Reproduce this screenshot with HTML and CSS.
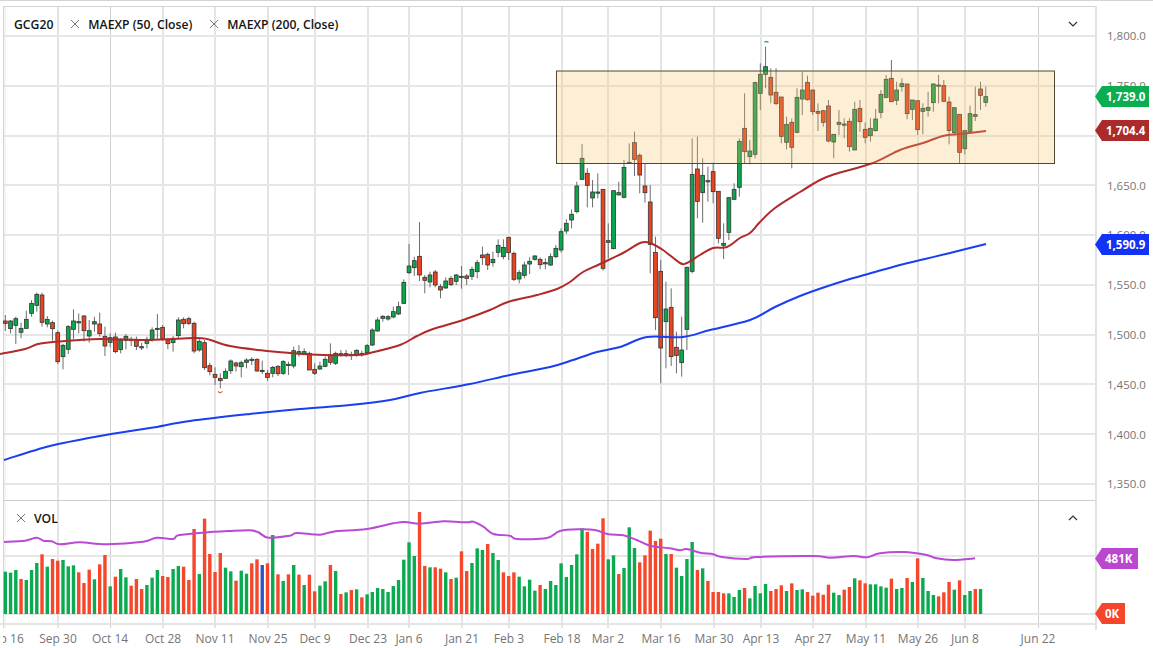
FILE: index.html
```html
<!DOCTYPE html>
<html lang="en">
<head>
<meta charset="utf-8">
<title>GCG20 chart</title>
<link rel="stylesheet" href="styles.css">
</head>
<body>
<main class="chart">
  <section class="pane">
    <svg id="price-plot" class="plot" width="1095" height="494" viewBox="0 6 1095 494" aria-label="Price chart"></svg>
    <div class="legend">
      <span class="symbol">GCG20</span>
      <span class="study"><svg class="close" viewBox="0 0 8 8"><path d="M0 0l8 8M8 0l-8 8"/></svg>MAEXP (50, Close)</span>
      <span class="study"><svg class="close" viewBox="0 0 8 8"><path d="M0 0l8 8M8 0l-8 8"/></svg>MAEXP (200, Close)</span>
    </div>
    <svg class="chevron" viewBox="0 0 10 6"><path d="M1 1l4 4 4-4"/></svg>
  </section>
  <aside class="axis price-axis">
    <div class="tick">1,800.0</div>
    <div class="tick">1,750.0</div>
    <div class="tick">1,700.0</div>
    <div class="tick">1,650.0</div>
    <div class="tick">1,600.0</div>
    <div class="tick">1,550.0</div>
    <div class="tick">1,500.0</div>
    <div class="tick">1,450.0</div>
    <div class="tick">1,400.0</div>
    <div class="tick">1,350.0</div>
    <span class="tag tag-green">1,739.0</span>
    <span class="tag tag-maroon">1,704.4</span>
    <span class="tag tag-blue">1,590.9</span>
  </aside>
  <section class="pane">
    <svg id="volume-plot" class="plot" width="1095" height="130" viewBox="0 500 1095 130" aria-label="Volume chart"></svg>
    <div class="legend legend-vol">
      <span class="study"><svg class="close" viewBox="0 0 8 8"><path d="M0 0l8 8M8 0l-8 8"/></svg>VOL</span>
    </div>
    <svg class="chevron" viewBox="0 0 10 6"><path d="M1 5l4-4 4 4"/></svg>
  </section>
  <aside class="axis volume-axis">
    <span class="tag tag-purple">481K</span>
    <span class="tag tag-red">0K</span>
  </aside>
  <nav class="time-axis">
    <span style="left:2px">Sep 16</span>
    <span style="left:55px">Sep 30</span>
    <span style="left:107px">Oct 14</span>
    <span style="left:160px">Oct 28</span>
    <span style="left:212px">Nov 11</span>
    <span style="left:265px">Nov 25</span>
    <span style="left:312px">Dec 9</span>
    <span style="left:365px">Dec 23</span>
    <span style="left:406px">Jan 6</span>
    <span style="left:459px">Jan 21</span>
    <span style="left:506px">Feb 3</span>
    <span style="left:559px">Feb 18</span>
    <span style="left:605px">Mar 2</span>
    <span style="left:658px">Mar 16</span>
    <span style="left:711px">Mar 30</span>
    <span style="left:758px">Apr 13</span>
    <span style="left:810px">Apr 27</span>
    <span style="left:863px">May 11</span>
    <span style="left:915px">May 26</span>
    <span style="left:962px">Jun 8</span>
    <span style="left:1035px">Jun 22</span>
  </nav>
</main>
<script src="chart.js"></script>
</body>
</html>
```
FILE: styles.css
```css
* { box-sizing: border-box; }
html, body { margin: 0; padding: 0; background: #fff; }
body { overflow: hidden; font-family: "Open Sans", "Liberation Sans", sans-serif; }

.chart {
  width: 1153px;
  height: 648px;
  padding-top: 5px;
  border-top: 1px solid #d4d4d4;
  display: grid;
  grid-template-columns: 1095px 58px;
  grid-template-rows: 494px 130px 18px;
  overflow: hidden;
}

.pane { position: relative; }
.plot { display: block; }

.legend {
  position: absolute;
  left: 14px;
  top: 0;
  height: 36px;
  display: flex;
  align-items: center;
  gap: 18px;
  font-size: 12.2px;
  font-weight: 600;
  color: #141414;
  white-space: nowrap;
}
.legend .study { display: inline-flex; align-items: center; gap: 9px; }
.legend-vol { left: 17px; top: 0; height: 36px; }
.close { width: 8px; height: 8px; fill: none; stroke: #777; stroke-width: 1; }

.chevron {
  position: absolute;
  right: 17px;
  top: 15px;
  width: 10px;
  height: 6px;
  fill: none;
  stroke: #333;
  stroke-width: 1.2;
}

.axis { position: relative; border-left: 2px solid #e2e2e2; }
.price-axis { padding-top: 5px; }
.tick {
  height: 49.78px;
  display: flex;
  align-items: center;
  padding-left: 10px;
  font-size: 11.5px;
  color: #757575;
}

.tag {
  position: absolute;
  left: -2px;
  height: 21px;
  display: flex;
  align-items: center;
  padding-left: 11px;
  font-size: 11.5px;
  font-weight: 700;
  color: #fff;
  clip-path: polygon(7px 0, 100% 0, 100% 100%, 7px 100%, 0 50%);
}
.tag-green { top: 80px; width: 54px; background: #0aad50; }
.tag-maroon { top: 114px; width: 54px; background: #ab2b2b; }
.tag-blue { top: 228px; width: 54px; background: #1233f5; }
.tag-purple { top: 48px; width: 43px; background: #bb46d0; padding-left: 10px; }
.tag-red { top: 103px; width: 30px; background: #f5452b; padding-left: 10px; }

.time-axis {
  grid-column: 1 / -1;
  position: relative;
  overflow: hidden;
  margin-left: 3px;
  font-size: 12px;
  color: #757575;
}
.time-axis span {
  position: absolute;
  top: 0;
  transform: translateX(-50%);
  white-space: nowrap;
}
```
FILE: chart.js
```js
const SVGNS = 'http://www.w3.org/2000/svg';
const X = i => 5.33 + 5.243 * i;
const COLORS = { g: '#0aa54d', r: '#e9431f', b: '#2c55c9' };
const VOL_COLORS = { g: '#0aab50', r: '#f6472b', b: '#2c55c9' };

function add(svg, name, attrs) {
  const el = document.createElementNS(SVGNS, name);
  for (const k in attrs) el.setAttribute(k, attrs[k]);
  svg.appendChild(el);
  return el;
}
function parse(y0, text) {
  return text.trim().split(/\s*;\s*/).map(r => {
    const p = r.split(/\s+/);
    return [p[0]].concat(p.slice(1).map(v => y0 + v / 3));
  });
}
function line(x0, y0, flat) {
  const out = [];
  for (let i = 0; i < flat.length; i += 2) out.push([x0 + flat[i] / 3, y0 + flat[i + 1] / 3]);
  return out;
}
function smooth(pts) {
  let d = 'M' + pts[0][0].toFixed(1) + ' ' + pts[0][1].toFixed(1);
  for (let i = 0; i < pts.length - 1; i++) {
    const a = pts[i - 1] || pts[i], b = pts[i], c = pts[i + 1], e = pts[i + 2] || c;
    const c1x = b[0] + (c[0] - a[0]) / 6, c1y = b[1] + (c[1] - a[1]) / 6;
    const c2x = c[0] - (e[0] - b[0]) / 6, c2y = c[1] - (e[1] - b[1]) / 6;
    d += 'C' + [c1x, c1y, c2x, c2y, c[0], c[1]].map(v => v.toFixed(1)).join(' ');
  }
  return d;
}

const candles = [].concat(
  parse(270, `r 135 153 160 183;g 150 153 176 190;g 140 146 166 222;g 158 175 187 205;g 122 148 175 175;
g 90 100 130 140;g 68 73 106 125;r 68 75 157 170;g 138 148 162 172;r 152 158 176 212;r 182 188 275 282;
g 222 226 260 298;g 165 170 238 252;g 118 153 178 208;g 130 155 158 190;r 135 138 182 215;g 150 182 198 218;
g 140 155 162 185;r 128 162 191 200;r 170 199 228 258;g 190 203 217 232;r 188 201 245 250;g 205 211 239 250;
g 192 199 211 238;g 200 208 211 228;r 200 208 229 240;g 218 230 232 240;g 200 208 220 235;g 172 180 208 215;
g 132 175 178 208;r 165 172 207 212;r 203 209 221 238;g 198 205 218 245;g 142 150 197 205;r 142 148 161 175;
r 140 146 160 165;r 155 160 243 250;g 205 214 240 245;r 210 218 293 300;r 278 287 305 316;r 292 313 322 345;
r 310 325 332 355;g 295 304 325 325;g 268 273 302 312;r 275 279 288 305;g 272 278 290 322;g 265 270 277 295;
g 262 268 271 285;r 265 268 303 305;g 272 301 303 312;r 300 310 322 332;g 288 292 310 322;r 285 289 311 318;
g 270 275 310 315;g 275 283 286 315`),
  parse(200, `g 440 452 498 505;g 435 455 460 470;g 445 455 462 465;r 455 460 510 510;r 490 508 520 525;
g 485 498 507 510;g 470 478 499 502;r 430 465 487 495;g 455 460 490 495;g 450 461 465 470;g 450 461 464 472;
g 455 463 466 480;g 448 451 465 470;r 452 460 464 470;g 432 437 458 462;g 385 390 435 438;g 352 360 393 395;
g 345 349 355 365;g 345 350 357 362;g 320 335 351 355;g 305 320 342 345;g 238 247 310 312;g 132 198 218 222;
g 170 182 203 228;r 66 169 225 243;r 225 232 241 280;g 215 225 246 262;r 210 216 255 262;r 252 260 270 295;
g 232 243 264 266;r 228 235 254 258;g 222 225 244 255;g 198 229 232 266;r 222 228 235 255;g 200 208 229 240;
g 180 188 215 235;r 140 165 173 195;r 158 163 195 210;g 155 178 188 200;g 118 136 157 172;g 118 142 170 178;
r 110 112 158 180;r 155 160 238 243;g 210 218 237 250;g 185 195 226 235;g 172 184 192 222;g 165 168 178 182;
r 172 178 194 208;g 175 188 191 208;g 160 170 195 198`),
  parse(130, `g 345 355 380 385;g 295 305 360 368;g 268 280 303 312;g 238 253 270 295;g 155 168 245 250;
g 42 85 148 150;r 115 130 166 232;g 150 186 204 232;g 130 186 188 205;r 178 178 415 422;g 280 332 337 385;
g 182 182 356 358;g 155 188 195 195;g 90 112 202 205;g 40 97 99 100;r 5 38 88 138;r 70 76 135 190;
r 100 168 188 218;r 165 216 343 430;r 320 367 563 600;r 390 424 654 760;g 455 537 575 715;r 475 532 680 708;
r 605 652 676 730;g 560 660 698 740;g 410 412 598 660;g 25 133 424 430;r 20 117 214 265;g 85 136 188 278;
g 110 152 155 215;r 98 125 185 220;r 184 184 325 340;g 280 340 346 387;g 203 203 307 330;g 160 178 208 208;
g 25 34 172 200`),
  parse(35, `r 175 280 350 385;g 315 348 365 388;g 140 143 358 370;g 85 118 175 225;g 35 95 118 160;
r 100 127 180 205;r 100 172 206 210;r 186 186 304 325;g 245 268 322 343;r 250 262 337 400;g 160 187 292 295;
g 110 165 192 240;r 122 142 194 197;r 165 165 230 240;r 205 229 235 288;r 225 227 262 275;r 195 213 318 322;
g 298 298 321 370;g 225 262 268 300;g 250 267 270 310;r 250 259 335 350;g 200 223 345 345;r 195 220 260 290;
r 262 283 307 325;g 250 280 302 320;g 222 252 287 290;g 165 178 232 250;g 120 133 187 190;r 75 130 200 200;
g 140 165 196 210;g 130 146 155 170;r 147 147 236 253;g 195 195 223 255;r 197 197 284 300;g 205 220 229 298;
g 170 217 226 245;g 145 147 203 230;r 120 150 153 205;r 135 152 199 200;r 185 201 287 328;g 218 218 293 302;
r 238 238 352 385;g 287 287 341 358;g 212 236 289 290;g 155 239 244 258;r 140 162 181 225;g 155 185 202 215`)
);

const volumes = parse(495, `g 230;g 233;g 225;r 252;g 255;g 225;g 204;r 178;g 215;r 192;r 197;g 195;g 214;g 211;r 232;r 264;r 224;
g 253;r 208;r 180;g 274;r 245;g 222;g 247;r 272;r 252;r 282;g 270;g 248;g 225;r 243;r 246;g 222;g 213;r 215;r 255;
r 102;g 237;r 71;r 177;r 231;r 174;g 218;g 229;r 257;g 227;g 236;r 205;r 193;b 210;r 205;g 120;r 238;g 258;r 238;
g 210;r 239;g 270;r 239;r 289;g 272;g 259;r 210;g 228;r 297;g 292;r 285;g 283;r 307;g 298;g 291;g 279;g 282;g 291;
g 273;g 255;g 194;g 142;g 183;r 51;r 213;g 217;r 217;r 221;g 232;r 252;g 248;r 169;r 228;g 204;g 160;g 165;r 147;
g 174;g 195;r 232;r 243;r 232;g 245;g 274;g 254;g 287;r 270;g 282;g 258;g 270;g 205;g 246;g 210;g 178;
g 100;r 111;r 162;r 146;r 70;g 193;g 181;r 237;g 219;g 97;g 159;r 202;r 181;r 107;r 138;r 131;g 177;r 177;g 218;
g 243;g 192;g 141;r 225;g 220;r 258;r 291;r 291;r 295;g 295;g 306;g 285;r 279;g 310;g 273;g 295;g 267;r 288;r 282;
r 271;g 288;r 265;g 285;g 283;r 291;r 302;r 293;r 299;r 269;g 293;g 300;r 284;r 276;g 250;r 256;r 265;
g 268;g 268;g 274;g 278;r 251;g 282;g 279;r 249;g 261;r 190;g 249;g 288;g 300;r 304;r 292;r 261;g 284;r 256;g 300;
g 288;r 282;g 282`);

const ma50 = [[0,354],[25,349],[38,344],[53,342],[100,339],[150,340],[193,338],[207,339],[230,346],[267,351],[290,353],
  [323,355],[357,355],[370,353],[400,345],[417,336],[433,329],[463,320],[490,310],[508,302],[537,295],[557,289],[570,282],
  [583,272],[600,264],[623,253],[640,243],[650,243],[663,250],[680,263],[687,263],[700,255],[713,248],[727,247],[740,238],
  [750,233],[760,222],[775,208],[800,192],[820,180],[835,174],[873,163],[900,150],[923,143],[943,136],[960,134],[986,131]];
const ma200 = [[4,460],[50,446],[100,436],[150,428],[190,421],[250,414],[300,409],[350,405],[390,400],[420,393],[470,384],
  [510,375],[550,367],[573,360],[597,352],[620,347],[647,337],[683,337],[710,330],[750,320],[775,307],[800,296],[825,287],
  [850,279],[875,272],[900,265],[925,259],[950,253],[986,244]];
const volMa = [].concat(
  line(0, 495, [12,141,75,137,110,128,130,137,155,139,180,148,240,142,320,148,430,140,470,128,520,132,535,121,610,113,690,108,750,106,775,112,805,128]),
  line(290, 495, [0,122,20,114,90,119,130,110,230,102,310,85,345,81,390,86,460,79,530,82,550,80,580,95,610,117,660,122,680,132,770,129,810,108]),
  line(580, 495, [0,103,45,105,85,118,130,121,170,135,210,152,270,160,300,166,320,162,360,173,400,178,425,186,500,192,530,186,700,183,750,188,820,183]),
  line(860, 495, [20,187,60,175,130,171,200,180,230,190,280,195,345,190])
);

const thick = [58,163,215,268,315,368,409,462,509,562,608,661,714,761,813,866,918,965];
const thin = [110.5,1038.5];

function verticals(svg, y1, y2) {
  thick.forEach(x => add(svg, 'line', { x1: x, x2: x, y1, y2, stroke: '#e4e4e4', 'stroke-width': 2 }));
  thin.forEach(x => add(svg, 'line', { x1: x, x2: x, y1, y2, stroke: '#cfcfcf', 'stroke-width': 1 }));
  add(svg, 'line', { x1: 3.5, x2: 3.5, y1, y2, stroke: '#d4d4d4', 'stroke-width': 1 });
  add(svg, 'line', { x1: 5, x2: 5, y1, y2, stroke: '#ececec', 'stroke-width': 1 });
}
function horizontal(svg, y, color, w) {
  add(svg, 'line', { x1: 4, x2: 1095, y1: y, y2: y, stroke: color, 'stroke-width': w });
}

const price = document.getElementById('price-plot');
verticals(price, 6, 500);
horizontal(price, 6.5, '#d4d4d4', 1);
for (let i = 0; i < 10; i++) horizontal(price, Math.round(36 + i * 49.78), '#e6e6e6', 2);

candles.forEach((c, i) => {
  const x = X(i);
  add(price, 'line', { x1: x, x2: x, y1: c[1], y2: c[4], stroke: '#6d6d6d', 'stroke-width': 1 });
  add(price, 'rect', { x: x - 1.9, y: c[2], width: 3.8, height: Math.max(c[3] - c[2], 1.2),
    fill: COLORS[c[0]], stroke: '#333', 'stroke-width': 0.8 });
});

add(price, 'path', { d: smooth(ma50), fill: 'none', stroke: '#b02a2a', 'stroke-width': 2 });
add(price, 'path', { d: smooth(ma200), fill: 'none', stroke: '#1a3ff0', 'stroke-width': 2 });
add(price, 'path', { d: 'M764 42l2.5 -.6 2 1', fill: 'none', stroke: '#12b060', 'stroke-width': 1.2 });
add(price, 'path', { d: 'M218 391.5l2 1.4 2.5 -1.4', fill: 'none', stroke: '#f0503a', 'stroke-width': 1.2 });
add(price, 'rect', { x: 556.5, y: 71, width: 498, height: 92.5, fill: '#f9bf68', 'fill-opacity': 0.27,
  stroke: '#4d4733', 'stroke-width': 1 });

const volume = document.getElementById('volume-plot');
verticals(volume, 500, 628);
horizontal(volume, 500, '#cdcdcd', 2);
horizontal(volume, 556, '#e6e6e6', 2);
horizontal(volume, 614, '#e6e6e6', 2);
add(volume, 'line', { x1: 0, x2: 1095, y1: 624, y2: 624, stroke: '#e4e4e4', 'stroke-width': 2 });

volumes.forEach((v, i) => {
  add(volume, 'rect', { x: X(i) - 1.7, y: v[1], width: 3.4, height: 614 - v[1], fill: VOL_COLORS[v[0]] });
});
add(volume, 'path', { d: smooth(volMa), fill: 'none', stroke: '#b94ad4', 'stroke-width': 2 });
```
